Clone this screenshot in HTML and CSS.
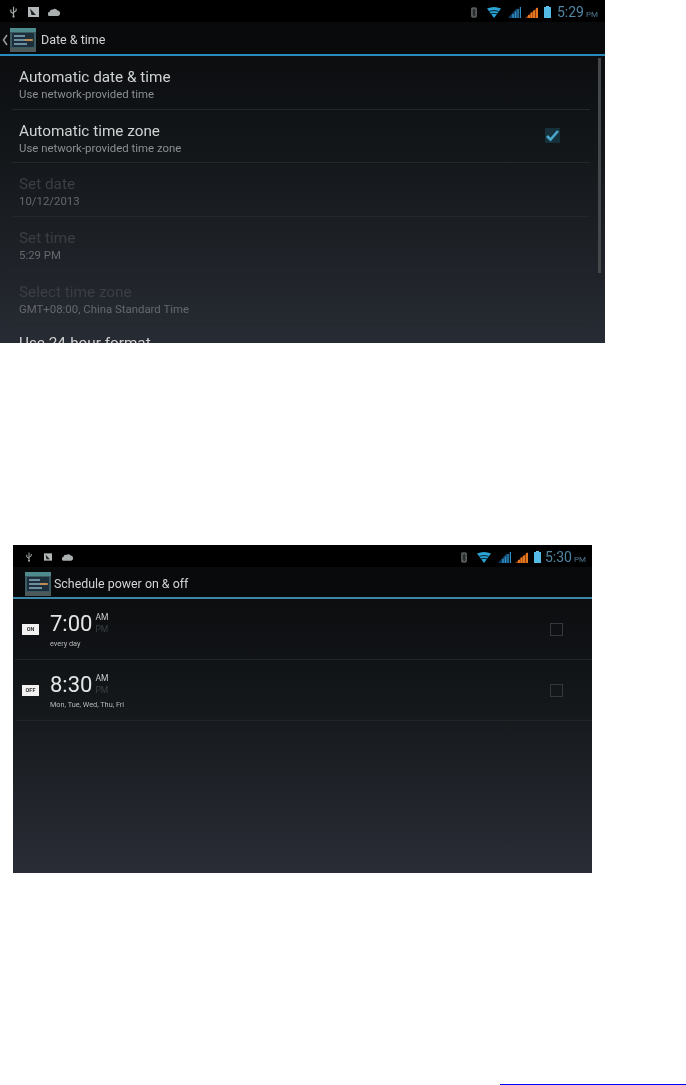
FILE: index.html
```html
<!DOCTYPE html>
<html lang="en">
<head>
<meta charset="utf-8">
<title>Date &amp; time</title>
<link rel="stylesheet" href="styles.css">
</head>
<body>
<svg class="defs" width="0" height="0" aria-hidden="true">
  <symbol id="usb" viewBox="0 0 8 12"><path d="M4 0v12M1 3v3l3 2M7 2v2.500L4 6.500" fill="none" stroke="#a8acab" stroke-width="1.300"/><circle cx="4" cy="11" r="1.200" fill="#a8acab"/></symbol>
  <symbol id="note" viewBox="0 0 11 10"><rect width="11" height="10" fill="#b4b8b8"/><path d="M2 1.500l6 6.500H3.500z" fill="#1c2022"/></symbol>
  <symbol id="cloud" viewBox="0 0 12 8"><path d="M2 8a2 2 0 0 1-.5-4A3 3 0 0 1 5 1.500 3 3 0 0 1 9.500 2.500 2.800 2.800 0 0 1 10 8z" fill="#a9aeae"/></symbol>
  <symbol id="bt" viewBox="0 0 7 12"><rect width="7" height="12" rx="2" fill="#565a5a"/><path d="M2 3.500l3 5-1.500 1.500v-8L5 3.500l-3 5" fill="none" stroke="#1a1c1c"/></symbol>
  <symbol id="wifi" viewBox="0 0 14 11"><path d="M0 1.500Q7-1.500 14 1.500L7 11z" fill="#2aa5d6"/><path d="M2.300 4.300Q7 2.700 11.700 4.300M4 6.800Q7 5.800 10 6.800" fill="none" stroke="#06222e"/></symbol>
  <symbol id="sig-blue" viewBox="0 0 13 11"><path d="M0 11L9 1v10z" fill="#0f3f66"/><path d="M5 11V7M7.500 11V4.500M10 11V2M12.500 11V0" stroke="#2f8fc4" stroke-width="1.500"/></symbol>
  <symbol id="sig-orange" viewBox="0 0 13 11"><path d="M0 11L13 0v11z" fill="#8a3c10"/><path d="M4 11V8M6.500 11V5.500M9 11V3.500M12 11V1" stroke="#ee7d22" stroke-width="1.800"/></symbol>
  <symbol id="batt" viewBox="0 0 7 12"><rect x="2" width="3" height="2" fill="#6fc6e8"/><rect y="1" width="7" height="11" fill="#53bbe6"/></symbol>
  <symbol id="app" viewBox="0 0 26 24"><rect width="26" height="24" fill="#3c5a62"/><rect width="26" height="4" fill="#4f8a8c"/><rect y="20" width="26" height="4" fill="#4c5a5c"/><rect x="2" y="5" width="22" height="14" fill="#1e2f3c"/><path d="M4 8h11M4 12h18M4 16h13" stroke="#6d8ea0" stroke-width="2"/><path d="M15 12h8" stroke="#d88a3a" stroke-width="1.500"/></symbol>
</svg>

<div class="page">
  <section class="screen screen-a">
    <div class="status">
      <svg class="si si-usb"><use href="#usb"/></svg>
      <svg class="si si-note"><use href="#note"/></svg>
      <svg class="si si-cloud"><use href="#cloud"/></svg>
      <span class="status-gap"></span>
      <svg class="si si-bt"><use href="#bt"/></svg>
      <svg class="si si-wifi"><use href="#wifi"/></svg>
      <svg class="si si-sig"><use href="#sig-blue"/></svg>
      <svg class="si si-sig"><use href="#sig-orange"/></svg>
      <svg class="si si-batt"><use href="#batt"/></svg>
      <span class="clock">5:29<small>PM</small></span>
    </div>
    <header class="bar">
      <svg class="back" viewBox="0 0 6 12"><path d="M5 1L1.500 6 5 11" fill="none" stroke="#9a9ea0" stroke-width="1.500"/></svg>
      <svg class="app"><use href="#app"/></svg>
      <h1 class="bar-title">Date &amp; time</h1>
    </header>
    <div class="list">
      <div class="row"><div><div class="name">Automatic date &amp; time</div><div class="sub">Use network-provided time</div></div></div>
      <div class="row"><div><div class="name">Automatic time zone</div><div class="sub">Use network-provided time zone</div></div>
        <span class="tick"><svg viewBox="0 0 15 15"><path d="M2 8l3.500 3.500L13 3" fill="none" stroke="#4aa8cc" stroke-width="2.600"/></svg></span></div>
      <div class="row off"><div><div class="name">Set date</div><div class="sub">10/12/2013</div></div></div>
      <div class="row off"><div><div class="name">Set time</div><div class="sub">5:29 PM</div></div></div>
      <div class="row off"><div><div class="name">Select time zone</div><div class="sub">GMT+08:00, China Standard Time</div></div></div>
      <div class="row row-cut"><div class="name">Use 24-hour format</div></div>
    </div>
    <span class="scroll"></span>
  </section>

  <section class="screen screen-b">
    <div class="status">
      <svg class="si si-usb"><use href="#usb"/></svg>
      <svg class="si si-note"><use href="#note"/></svg>
      <svg class="si si-cloud"><use href="#cloud"/></svg>
      <span class="status-gap"></span>
      <svg class="si si-bt"><use href="#bt"/></svg>
      <svg class="si si-wifi"><use href="#wifi"/></svg>
      <svg class="si si-sig"><use href="#sig-blue"/></svg>
      <svg class="si si-sig"><use href="#sig-orange"/></svg>
      <svg class="si si-batt"><use href="#batt"/></svg>
      <span class="clock">5:30<small>PM</small></span>
    </div>
    <header class="bar">
      <svg class="app"><use href="#app"/></svg>
      <h1 class="bar-title">Schedule power on &amp; off</h1>
    </header>
    <div class="alarms">
      <div class="alarm">
        <span class="badge">ON</span>
        <div class="when">
          <div class="time-line"><span class="time">7:00</span><span class="ampm"><span>AM</span><span class="dim">PM</span></span></div>
          <div class="days">every day</div>
        </div>
        <span class="box"></span>
      </div>
      <div class="alarm">
        <span class="badge">OFF</span>
        <div class="when">
          <div class="time-line"><span class="time">8:30</span><span class="ampm"><span>AM</span><span class="dim">PM</span></span></div>
          <div class="days">Mon, Tue, Wed, Thu, Fri</div>
        </div>
        <span class="box"></span>
      </div>
    </div>
  </section>

  <div class="link-rule"></div>
</div>
</body>
</html>
```

FILE: styles.css
```css
* { box-sizing: border-box; }
html, body { margin: 0; padding: 0; background: #fff; overflow: hidden; }
.defs { position: absolute; }
.page { display: flex; flex-direction: column; height: 1085px; font-family: Roboto, "Liberation Sans", sans-serif; }

.screen { position: relative; overflow: hidden; color: #d4d6d6; }
.screen-a { width: 605px; height: 343px; background: linear-gradient(#0b0d0f 15%, #14171a 45%, #272b33 100%); }
.screen-b { width: 579px; height: 328px; margin: 202px 0 0 13px; background: linear-gradient(#0b0d0f 15%, #15181b 50%, #2a2d36 100%); }

.status { display: flex; align-items: center; height: 22px; background: #000; filter: blur(.6px); }
.screen-a .status { padding: 2px 7px 0 10px; }
.screen-b .status { padding: 2px 6px 0 13px; }
.status-gap { flex: 1; }
.si { display: block; flex: none; }
.si-usb { width: 7px; height: 12px; margin-right: 11px; }
.si-note { width: 11px; height: 10px; margin-right: 9px; }
.si-cloud { width: 12px; height: 8px; }
.si-bt { width: 6px; height: 11px; margin-right: 10px; }
.si-wifi { width: 14px; height: 11px; margin-right: 7px; }
.si-sig { width: 13px; height: 11px; margin-right: 4px; }
.si-batt { width: 7px; height: 12px; margin: 0 6px 0 2px; }
.screen-b .si-usb { margin-right: 12px; width: 6px; }
.screen-b .si-note { width: 8px; margin-right: 10px; }
.screen-b .si-cloud { width: 11px; }
.screen-b .si-batt { margin-right: 4px; }
.clock { font-size: 14px; color: #4f86a3; white-space: nowrap; }
.clock small { font-size: 8px; margin-left: 2px; color: #4f7890; }

.bar { display: flex; align-items: center; background: #090a0b; filter: blur(.6px); }
.screen-a .bar { height: 34px; padding: 3px 0 0 2px; border-bottom: 2px solid #2a8cbe; }
.screen-b .bar { height: 32px; padding: 3px 0 0 12px; border-bottom: 2px solid #3f87a8; }
.back { width: 6px; height: 12px; margin-right: 2px; }
.app { width: 26px; height: 24px; }
.bar-title { margin: 0 0 0 5px; font-size: 12.500px; font-weight: 400; color: #d2d5d5; white-space: nowrap; }
.screen-b .bar-title { font-size: 12.400px; margin-left: 3px; }

.list { filter: blur(.6px); }
.row { display: flex; align-items: center; justify-content: space-between; height: 53.700px; margin: 0 15px 0 12px; padding: 4px 30px 0 7px; border-bottom: 1px solid #23272a; }
.row-cut { align-items: flex-start; padding-top: 10px; }
.name { font-size: 15.300px; line-height: 18px; color: #cfd2d2; white-space: nowrap; }
.sub { font-size: 11.400px; line-height: 14px; margin-top: 1px; color: #8b8f90; white-space: nowrap; }
.off .name { color: #3b3f44; }
.off .sub { color: #65696e; }
.tick { width: 15px; height: 15px; margin-bottom: 6px; background: #16303c; display: block; }
.tick svg { display: block; width: 15px; height: 15px; }
.scroll { position: absolute; left: 598px; top: 58px; width: 3px; height: 215px; background: #44484a; }

.alarms { filter: blur(.6px); }
.alarm { display: flex; align-items: center; height: 61px; padding: 0 29px 0 7px; margin-left: 2px; border-bottom: 1px solid #222629; }
.badge { width: 17px; height: 11px; background: #f2f2f2; color: #333; font-size: 5.500px; font-weight: 700; line-height: 11px; text-align: center; margin-right: 11px; }
.when { flex: 1; padding-top: 2px; }
.time-line { display: flex; align-items: flex-start; height: 24px; }
.time { font-size: 22px; font-weight: 400; line-height: 24px; color: #e4e6e6; }
.ampm { display: flex; flex-direction: column; margin-left: 3px; font-size: 8.500px; line-height: 11.500px; color: #c8cbcb; }
.dim { color: #3c4044; }
.days { font-size: 7.300px; line-height: 8px; margin-top: 4px; color: #b6b9b9; white-space: nowrap; }
.box { width: 13px; height: 13px; border: 1px solid #34383a; }

.link-rule { width: 186px; height: 1px; margin: 211px 0 0 500px; background: #0000ff; }
```
